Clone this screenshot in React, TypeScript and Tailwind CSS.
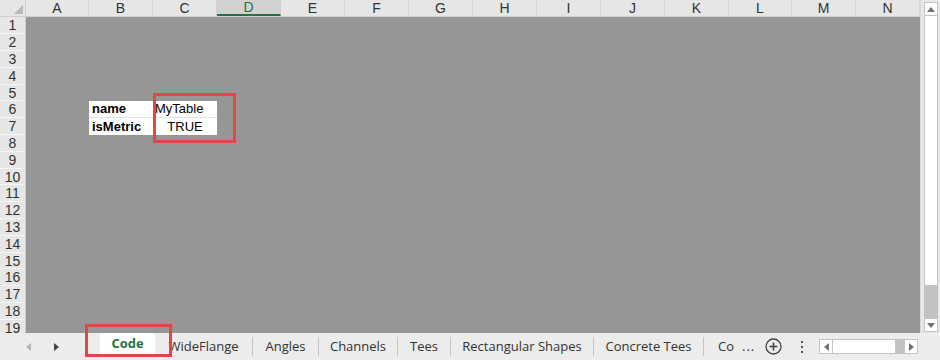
import React from "react";

const cols: { l: string; w: string }[] = [
  { l: "A", w: "w-[63px]" },
  { l: "B", w: "w-[64px]" },
  { l: "C", w: "w-[64px]" },
  { l: "D", w: "w-[64px]" },
  { l: "E", w: "w-[64px]" },
  { l: "F", w: "w-[64px]" },
  { l: "G", w: "w-[64px]" },
  { l: "H", w: "w-[64px]" },
  { l: "I", w: "w-[64px]" },
  { l: "J", w: "w-[64px]" },
  { l: "K", w: "w-[64px]" },
  { l: "L", w: "w-[63px]" },
  { l: "M", w: "w-[64px]" },
  { l: "N", w: "w-[64px]" },
];

const rowH = (i: number) => (i % 5 === 4 ? "h-[16px]" : "h-[17px]");
const rows = Array.from({ length: 19 }, (_, i) => i + 1);

function Tri({ dir, color }: { dir: "up" | "down" | "left" | "right"; color: string }) {
  const pts =
    dir === "up"
      ? "0,5 4,0 8,5"
      : dir === "down"
      ? "0,0 8,0 4,5"
      : dir === "left"
      ? "5,0 5,8 0,4"
      : "0,0 0,8 5,4";
  const w = dir === "up" || dir === "down" ? 8 : 5;
  const h = dir === "up" || dir === "down" ? 5 : 8;
  return (
    <svg width={w} height={h} viewBox={`0 0 ${w} ${h}`}>
      <polygon points={pts} fill={color} />
    </svg>
  );
}

function Sep() {
  return <div className="w-px h-[19px] bg-[#c4c4c4] shrink-0" />;
}

function Tab({ label, w }: { label: string; w: string }) {
  return (
    <div className={`${w} shrink-0 flex items-center justify-center text-[13px] text-[#333]`}>
      {label}
    </div>
  );
}

export default function App() {
  return (
    <div
      className="relative w-[940px] h-[360px] overflow-hidden bg-[#ececec] flex flex-col"
      style={{ fontFamily: '"Liberation Sans", Arial, sans-serif' }}
    >
      <div className="flex h-[333px] shrink-0">
        {/* sheet */}
        <div className="w-[920px] h-[333px] overflow-hidden flex flex-col bg-[#969696]">
          {/* column header */}
          <div className="flex h-[17px] shrink-0 bg-[#e6e6e6] border-b border-[#cfcfcf]">
            <div className="w-[26px] shrink-0 relative border-r border-[#cfcfcf]">
              <svg className="absolute right-[2px] bottom-[2px]" width="9" height="9" viewBox="0 0 9 9">
                <polygon points="9,0 9,9 0,9" fill="#b8b8b8" />
              </svg>
            </div>
            {cols.map((c) =>
              c.l === "D" ? (
                <div
                  key={c.l}
                  className={`${c.w} shrink-0 flex items-center justify-center text-[14px] leading-none text-[#217346] bg-[#d2d2d2] border-b-2 border-[#217346] border-r border-r-[#cfcfcf]`}
                >
                  {c.l}
                </div>
              ) : (
                <div
                  key={c.l}
                  className={`${c.w} shrink-0 flex items-center justify-center text-[14px] leading-none text-[#333] border-r border-[#d4d4d4]`}
                >
                  {c.l}
                </div>
              )
            )}
          </div>
          {/* body */}
          <div className="flex">
            <div className="w-[26px] shrink-0 flex flex-col border-r border-[#cfcfcf]">
              {rows.map((r, i) => (
                <div
                  key={r}
                  className={`${rowH(i)} shrink-0 bg-[#e6e6e6] border-b border-[#f6f6f6] flex items-center justify-center text-[14px] leading-none text-[#333]`}
                >
                  {r}
                </div>
              ))}
            </div>
            <div className="relative flex-1 flex flex-col">
              {rows.map((r, i) => (
                <div key={r} className={`${rowH(i)} shrink-0 flex`}>
                  <div className="w-[63px] shrink-0" />
                  {r === 6 || r === 7 ? (
                    <>
                      <div
                        className={`w-[64px] shrink-0 bg-white flex items-center pl-[3px] text-[13px] font-bold text-black ${
                          r === 6 ? "border-b border-[#e2e2e2]" : ""
                        }`}
                      >
                        {r === 6 ? "name" : "isMetric"}
                      </div>
                      <div
                        className={`w-[64px] shrink-0 bg-white flex items-center text-[13px] text-black ${
                          r === 6 ? "pl-[2px] border-b border-[#e2e2e2]" : "justify-center"
                        }`}
                      >
                        {r === 6 ? "MyTable" : "TRUE"}
                      </div>
                    </>
                  ) : null}
                </div>
              ))}
              <div className="absolute left-[127px] top-[76px] w-[83px] h-[50px] border-[3px] border-[#e04848]" />
            </div>
          </div>
        </div>
        {/* vertical scrollbar */}
        <div className="w-[20px] h-[333px] bg-[#e8e8e8] border-l border-[#d8d8d8] flex flex-col items-center pt-[2px]">
          <div className="w-[14px] h-[14px] bg-white border border-[#c4c4c4] flex items-center justify-center">
            <Tri dir="up" color="#707070" />
          </div>
          <div className="w-[14px] h-[270px] bg-white border-x border-b border-[#c4c4c4]" />
          <div className="w-[14px] h-[32px] bg-[#c2c2c2]" />
          <div className="w-[14px] h-[14px] bg-white border border-[#c4c4c4] flex items-center justify-center">
            <Tri dir="down" color="#707070" />
          </div>
        </div>
      </div>

      {/* tab bar */}
      <div
        className="flex items-center h-[27px] shrink-0 bg-[#ececec]"
        style={{ fontFamily: '"Open Sans", "Noto Sans", sans-serif' }}
      >
        <div className="w-[100px] h-full shrink-0 flex items-center">
          <div className="ml-[26px]">
            <Tri dir="left" color="#b5b5b5" />
          </div>
          <div className="ml-[23px]">
            <Tri dir="right" color="#444" />
          </div>
        </div>
        <div className="w-[55px] h-full shrink-0 flex flex-col">
          <div className="flex-1 bg-white flex items-center justify-center text-[13px] font-bold text-[#217346]">
            Code
          </div>
          <div className="h-[2px] bg-[#217346]" />
          <div className="h-[3px]" />
        </div>
        <Tab label="WideFlange" w="w-[97px]" />
        <Sep />
        <Tab label="Angles" w="w-[65px]" />
        <Sep />
        <Tab label="Channels" w="w-[78px]" />
        <Sep />
        <Tab label="Tees" w="w-[52px]" />
        <Sep />
        <Tab label="Rectangular Shapes" w="w-[142px]" />
        <Sep />
        <Tab label="Concrete Tees" w="w-[109px]" />
        <Sep />
        <div className="pl-[14px] w-[50px] shrink-0 text-[13px] text-[#333] flex items-center">
          <span>Co</span>
          <span className="ml-[8px] tracking-[1px]">...</span>
        </div>
        <div className="ml-[11px] shrink-0">
          <svg width="17" height="17" viewBox="0 0 17 17">
            <circle cx="8.5" cy="8.5" r="7.5" fill="none" stroke="#444" strokeWidth="1.3" />
            <line x1="8.5" y1="4.5" x2="8.5" y2="12.5" stroke="#444" strokeWidth="1.6" />
            <line x1="4.5" y1="8.5" x2="12.5" y2="8.5" stroke="#444" strokeWidth="1.6" />
          </svg>
        </div>
        <div className="ml-[18px] shrink-0 flex flex-col gap-[3px] items-center w-[4px]">
          <div className="w-[2px] h-[2px] bg-[#555]" />
          <div className="w-[2px] h-[2px] bg-[#555]" />
          <div className="w-[2px] h-[2px] bg-[#555]" />
        </div>
        <div className="ml-[15px] w-[99px] h-[15px] shrink-0 flex">
          <div className="w-[14px] h-full bg-white border border-[#c4c4c4] flex items-center justify-center">
            <Tri dir="left" color="#707070" />
          </div>
          <div className="w-[63px] h-full bg-white border-y border-r border-[#c4c4c4]" />
          <div className="w-[8px] h-full bg-[#c2c2c2]" />
          <div className="w-[14px] h-full bg-white border border-[#c4c4c4] flex items-center justify-center">
            <Tri dir="right" color="#707070" />
          </div>
        </div>
      </div>

      {/* annotation around Code tab */}
      <div className="absolute left-[85px] top-[324px] w-[87px] h-[33px] border-[3px] border-[#e04848]" />
    </div>
  );
}
